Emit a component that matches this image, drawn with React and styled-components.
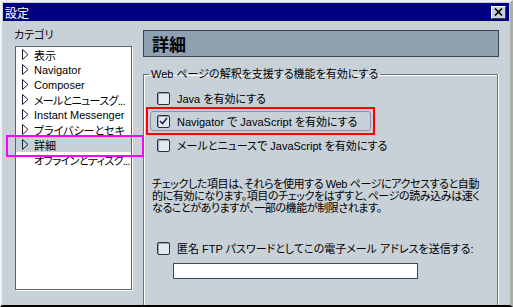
import styled, { createGlobalStyle } from "styled-components";

const GlobalStyle = createGlobalStyle`
    html, body {
        margin: 0;
        padding: 0;
        background: #c8d0d8;
    }
    body {
        font-family: "Liberation Sans", "Noto Sans CJK JP", sans-serif;
        font-size: 11px;
        font-feature-settings: "palt";
        color: #000;
    }
`;

// window frame
const Window = styled.div`
    position: relative;
    width: 513px;
    height: 307px;
    box-sizing: border-box;
    border-style: solid;
    border-width: 2px 3px 2px 2px;
    border-color: #eef0f2 #aeb0a8 #000 #eef0f2;
    padding: 1px;
    background: #c8d0d8;
    display: flex;
    flex-direction: column;
    overflow: hidden;
`;

const TitleBar = styled.div`
    height: 18px;
    flex: none;
    background: #000080;
    color: #fff;
    display: flex;
    align-items: center;
    justify-content: space-between;
    padding: 0 3px 0 2px;
    font-size: 12px;
`;

const CloseButton = styled.div`
    width: 15px;
    height: 13px;
    box-sizing: border-box;
    background: #c8d0d8;
    border: 1px solid;
    border-color: #fff #404040 #404040 #fff;
    display: flex;
    align-items: center;
    justify-content: center;
`;

const Body = styled.div`
    flex: 1;
    min-height: 0;
    display: flex;
    gap: 11px;
    padding: 0 0 0 12px;
`;

// left column
const Sidebar = styled.div`
    width: 117px;
    flex: none;
    display: flex;
    flex-direction: column;
`;

const Label = styled.div`
    margin: 8px 0 0 -1px;
    height: 17px;
    line-height: 12px;
`;

const ListBox = styled.div`
    height: 244px;
    box-sizing: border-box;
    background: #fff;
    border: 1px solid #5c6472;
    box-shadow: 1px 1px 0 #fff;
`;

const Item = styled.div`
    height: 15px;
    display: flex;
    align-items: center;
    gap: 5px;
    padding-left: 6px;
    white-space: nowrap;
    overflow: hidden;
    letter-spacing: ${(p) => (p.$tight ? "-0.7px" : "0")};
    background: ${(p) => (p.$selected ? "#c8d0d8" : "transparent")};

    svg, i {
        flex: none;
        width: 7px;
    }
`;

const Mark = styled.div`
    position: absolute;
    left: 4px;
    top: 133px;
    width: 138px;
    height: 22px;
    box-sizing: border-box;
    border: 2px solid #ff00ff;
`;

// right column
const Main = styled.div`
    width: 356px;
    flex: none;
    display: flex;
    flex-direction: column;
    padding-top: 9px;
`;

const Header = styled.div`
    height: 27px;
    flex: none;
    box-sizing: border-box;
    background: #8fa0b0;
    border: 1px solid #3c4450;
    padding-left: 8px;
    display: flex;
    align-items: center;
    font-size: 17px;
    font-weight: bold;
    font-family: "Noto Sans CJK JP", sans-serif;
`;

const Group = styled.fieldset`
    margin: 10px 1px -12px 0;
    padding: 7px 0 0 12px;
    flex: 1;
    min-width: 0;
    border: 1px solid #6a7280;
    border-bottom: none;
    box-shadow: inset 1px 1px 0 #fff, 1px 0 0 #fff;

    legend {
        padding: 0 2px;
        margin-left: -7px;
        line-height: 14px;
    }
`;

const CheckRow = styled.div`
    display: flex;
    align-items: center;
    gap: 7px;
    height: ${(p) => p.$h || 18}px;
    padding-left: 1px;
    white-space: nowrap;
`;

const Box = styled.div`
    width: 13px;
    height: 13px;
    flex: none;
    box-sizing: border-box;
    background: #e2eaf0;
    border: 1px solid #28303c;
    border-radius: 2px;
    box-shadow: inset 1px 1px 0 #9aa4b0;
    display: flex;
    align-items: center;
    justify-content: center;
`;

const Highlight = styled.div`
    width: fit-content;
    margin: -1px 0 1px -10px;
    border: 2px solid #ff0000;
    padding: 2px;
`;

const Focus = styled.div`
    width: 214px;
    border: 1px solid #8a94a0;
    border-radius: 3px;
    padding-left: 5px;
`;

const Note = styled.p`
    margin: 24px 0 0 -4px;
    line-height: 12px;
    letter-spacing: -0.4px;
`;

const TextInput = styled.div`
    width: 245px;
    height: 16px;
    box-sizing: border-box;
    margin: 6px 0 0 17px;
    background: #fff;
    border: 1px solid #404856;
`;

function Arrow() {
    return (
        <svg width="7" height="11" viewBox="0 0 7 11">
            <path d="M0.5 0.5 L6 5.5 L0.5 10.5 Z" fill="none" stroke="#1a2030" strokeWidth="1" />
        </svg>
    );
}

const categories = [
    "表示",
    "Navigator",
    "Composer",
    "メールとニュースグ...",
    "Instant Messenger",
    "プライバシーとセキ",
    "詳細",
    "オフラインとディスク...",
];

export default function App() {
    return (
        <>
            <GlobalStyle />
            <Window>
                <TitleBar>
                    <span>設定</span>
                    <CloseButton>
                        <svg width="9" height="8" viewBox="0 0 9 8">
                            <path d="M1 0.5 L8 7.5 M8 0.5 L1 7.5" stroke="#000" strokeWidth="1.6" />
                        </svg>
                    </CloseButton>
                </TitleBar>
                <Body>
                    <Sidebar>
                        <Label>カテゴリ</Label>
                        <ListBox>
                            {categories.map((c, i) => (
                                <Item key={c} $selected={i === 6} $tight={c.endsWith("...")}>
                                    {i < 7 ? <Arrow /> : <i />}
                                    {c}
                                </Item>
                            ))}
                        </ListBox>
                    </Sidebar>
                    <Main>
                        <Header>詳細</Header>
                        <Group>
                            <legend>Web ページの解釈を支援する機能を有効にする</legend>
                            <CheckRow $h={20}>
                                <Box />
                                Java を有効にする
                            </CheckRow>
                            <Highlight>
                                <Focus>
                                    <CheckRow>
                                        <Box>
                                            <svg width="9" height="8" viewBox="0 0 9 8">
                                                <path d="M1 4 L3.5 6.5 L8 1" fill="none" stroke="#1a2a50" strokeWidth="1.6" />
                                            </svg>
                                        </Box>
                                        Navigator で JavaScript を有効にする
                                    </CheckRow>
                                </Focus>
                            </Highlight>
                            <CheckRow>
                                <Box />
                                メールとニュースで JavaScript を有効にする
                            </CheckRow>
                            <Note>
                                チェックした項目は、それらを使用する Web ページにアクセスすると自動
                                <br />
                                的に有効になります。項目のチェックをはずすと、ページの読み込みは速く
                                <br />
                                なることがありますが、一部の機能が制限されます。
                            </Note>
                            <CheckRow style={{ marginTop: 25 }}>
                                <Box />
                                匿名 FTP パスワードとしてこの電子メール アドレスを送信する:
                            </CheckRow>
                            <TextInput />
                        </Group>
                    </Main>
                </Body>
                <Mark />
            </Window>
        </>
    );
}
